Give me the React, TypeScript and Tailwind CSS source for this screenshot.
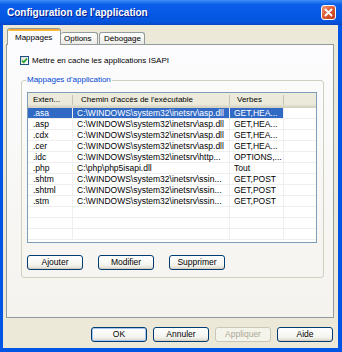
const rows = [
  { ext: '.asa', path: 'C:\\WINDOWS\\system32\\inetsrv\\asp.dll', verbs: 'GET,HEA...', selected: true },
  { ext: '.asp', path: 'C:\\WINDOWS\\system32\\inetsrv\\asp.dll', verbs: 'GET,HEA...' },
  { ext: '.cdx', path: 'C:\\WINDOWS\\system32\\inetsrv\\asp.dll', verbs: 'GET,HEA...' },
  { ext: '.cer', path: 'C:\\WINDOWS\\system32\\inetsrv\\asp.dll', verbs: 'GET,HEA...' },
  { ext: '.idc', path: 'C:\\WINDOWS\\system32\\inetsrv\\http...', verbs: 'OPTIONS,...' },
  { ext: '.php', path: 'C:\\php\\php5isapi.dll', verbs: 'Tout' },
  { ext: '.shtm', path: 'C:\\WINDOWS\\system32\\inetsrv\\ssin...', verbs: 'GET,POST' },
  { ext: '.shtml', path: 'C:\\WINDOWS\\system32\\inetsrv\\ssin...', verbs: 'GET,POST' },
  { ext: '.stm', path: 'C:\\WINDOWS\\system32\\inetsrv\\ssin...', verbs: 'GET,POST' },
  { ext: '', path: '', verbs: '' },
  { ext: '', path: '', verbs: '' },
  { ext: '', path: '', verbs: '' },
]

function XPButton({ label, disabled, isDefault }: { label: string; disabled?: boolean; isDefault?: boolean }) {
  const base = 'h-[15px] w-[56px] rounded-[3px] border flex items-center justify-center leading-none text-[8.5px]'
  if (disabled) {
    return <div className={`${base} border-[#c9c7ba] bg-[#f5f4ea] text-[#aca899]`}>{label}</div>
  }
  return (
    <div
      className={`${base} border-[#003c74] bg-[linear-gradient(to_bottom,#ffffff,#f4f4ef_70%,#dcd8cc)] ${
        isDefault ? 'shadow-[inset_0_0_0_1px_#a7c4f0]' : 'shadow-[inset_0_-1px_0_#d6d0c0]'
      }`}
    >
      {label}
    </div>
  )
}

export default function App() {
  return (
    <div className="w-[342px] h-[352px] flex flex-col font-['Liberation_Sans',Arial,sans-serif] text-[8px] text-black overflow-hidden">
      {/* Title bar */}
      <div className="h-[25px] shrink-0 flex items-center justify-between pl-[7px] pr-[6px] bg-[linear-gradient(to_bottom,#3d8ef7,#0a5ee8_18%,#0458e4_60%,#0553dd_88%,#0a44c2)]">
        <span className="text-white font-bold text-[10px] [text-shadow:1px_1px_0_#0a1e8a]">
          Configuration de l'application
        </span>
        <div className="w-[15px] h-[15px] rounded-[3px] border border-white bg-[linear-gradient(135deg,#f19a7a,#db5a33_50%,#c1401c)] flex items-center justify-center">
          <svg width="9" height="9" viewBox="0 0 9 9">
            <path d="M1.5 1.5 L7.5 7.5 M7.5 1.5 L1.5 7.5" stroke="white" strokeWidth="1.8" strokeLinecap="round" />
          </svg>
        </div>
      </div>

      {/* Frame */}
      <div className="flex-1 flex flex-col bg-[#0055e5] pl-[3px] pr-[4px] pb-[4px]">
        <div className="flex-1 flex flex-col bg-[#ece9d8] pt-[3px] pl-[3px] pr-[4px]">
          {/* Tabs */}
          <div className="h-[16px] flex items-end pl-[1px] relative z-10">
            <div className="h-[17px] w-[54px] -mb-px rounded-t-[3px] border border-b-0 border-[#919b9c] bg-[#fcfcfe] flex flex-col overflow-hidden">
              <div className="h-[3px] bg-[linear-gradient(to_bottom,#e68b2c,#ffc83c)] -mx-px -mt-px"></div>
              <div className="flex-1 flex items-center pl-[7px] pb-[1px]">Mappages</div>
            </div>
            <div className="h-[12px] w-[37px] rounded-t-[3px] border border-b-0 border-l-0 border-[#919b9c] bg-[linear-gradient(to_bottom,#ffffff,#ecebe5)] flex items-center pl-[3px]">
              Options
            </div>
            <div className="h-[12px] w-[46px] ml-px rounded-t-[3px] border border-b-0 border-[#919b9c] bg-[linear-gradient(to_bottom,#ffffff,#ecebe5)] flex items-center pl-[4px]">
              Débogage
            </div>
          </div>

          {/* Panel */}
          <div className="h-[274px] w-[328px] border border-[#919b9c] bg-[linear-gradient(to_bottom,#fcfcfe,#f4f3ee)] flex flex-col pt-[11px]">
            <div className="flex items-center pl-[13px] h-[9px]">
              <div className="w-[9px] h-[9px] border border-[#1c5180] bg-[linear-gradient(135deg,#dcdcd7,#ffffff)] flex items-center justify-center">
                <svg width="7" height="7" viewBox="0 0 7 7">
                  <path d="M1 3.5 L2.8 5.3 L6 1.6" stroke="#21a121" strokeWidth="1.6" fill="none" />
                </svg>
              </div>
              <span className="ml-[3px]">Mettre en cache les applications ISAPI</span>
            </div>

            <fieldset className="mt-[10px] ml-[14px] w-[303px] border border-[#d0d0bf] rounded-[3px] pb-[7px]">
              <legend className="ml-[4px] px-[1px] text-[#0046d5] leading-[10px]">Mappages d'application</legend>

              <div className="mt-[7px] ml-[5px] w-[290px] h-[151px] border border-[#7f9db9] bg-white overflow-hidden">
                {/* Header */}
                <div className="h-[15px] flex bg-[linear-gradient(to_bottom,#ebeadb,#ebeadb_80%,#d6d2c2)] border-b border-[#d6d2c2]">
                  <div className="w-[45px] flex items-center pl-[5px] border-r border-[#c7c5b2] my-[2px]">Exten...</div>
                  <div className="w-[157px] flex items-center pl-[8px] border-r border-[#c7c5b2] my-[2px]">
                    Chemin d'accès de l'exécutable
                  </div>
                  <div className="w-[54px] flex items-center pl-[7px] border-r border-[#c7c5b2] my-[2px]">Verbes</div>
                  <div className="flex-1"></div>
                </div>
                {/* Rows */}
                {rows.map((r, i) => (
                  <div key={i} className="h-[11px] flex border-b border-[#efefef] leading-none text-[8.5px]">
                    <div
                      className={`w-[45px] flex items-center pl-[5px] border-r border-[#efefef] whitespace-nowrap ${
                        r.selected ? 'bg-[#316ac5] text-white' : ''
                      }`}
                    >
                      {r.ext}
                    </div>
                    <div
                      className={`w-[157px] flex items-center pl-[4px] border-r border-[#efefef] whitespace-nowrap overflow-hidden ${
                        r.selected ? 'bg-[#316ac5] text-white' : ''
                      }`}
                    >
                      {r.path}
                    </div>
                    <div
                      className={`w-[54px] flex items-center pl-[4px] border-r border-[#efefef] whitespace-nowrap overflow-hidden ${
                        r.selected ? 'bg-[#316ac5] text-white' : ''
                      }`}
                    >
                      {r.verbs}
                    </div>
                    <div className="flex-1"></div>
                  </div>
                ))}
              </div>

              <div className="mt-[12px] ml-[5px] flex gap-[15px]">
                <XPButton label="Ajouter" />
                <XPButton label="Modifier" />
                <XPButton label="Supprimer" />
              </div>
            </fieldset>
          </div>

          {/* Dialog buttons */}
          <div className="mt-[9px] flex justify-end gap-[6px] pr-[1px]">
            <XPButton label="OK" isDefault />
            <XPButton label="Annuler" />
            <XPButton label="Appliquer" disabled />
            <XPButton label="Aide" />
          </div>
        </div>
      </div>
    </div>
  )
}
